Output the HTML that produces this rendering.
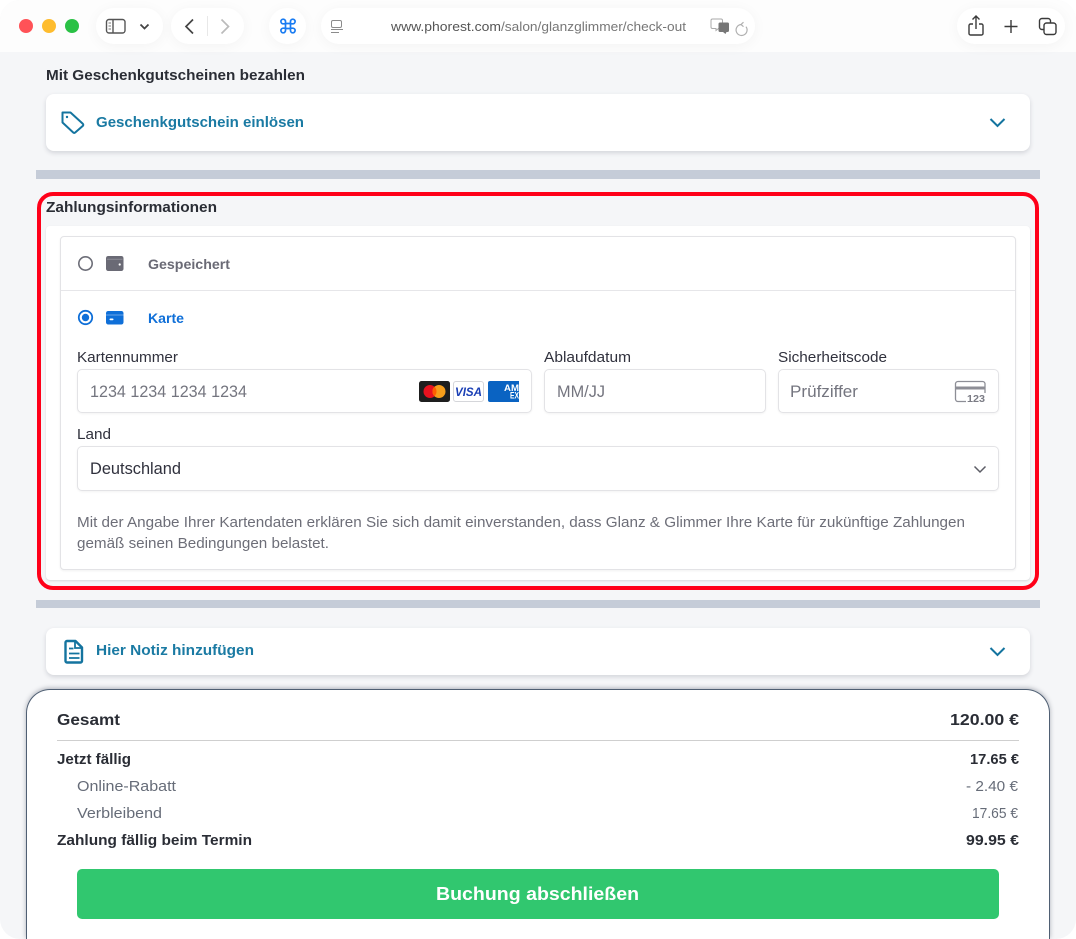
<!DOCTYPE html>
<html lang="de"><head><meta charset="utf-8"><title>Checkout</title>
<style>
html,body{margin:0;padding:0;width:1076px;height:939px;overflow:hidden;background:#fff}
#w{position:absolute;left:0;top:0;width:1076px;height:939px;background:#f5f6f8;border-radius:20px;overflow:hidden}
.b{position:absolute;box-sizing:border-box}
#top{left:0;top:0;width:1076px;height:52px;background:#fdfdfd}
.pill{background:#fff;height:36px;top:8px;border-radius:18px;box-shadow:0 2px 14px rgba(0,0,0,.045)}
.card{background:#fff;border-radius:8px;left:46px;width:984px;box-shadow:0 2px 5px rgba(30,40,60,.16)}
.bar{background:#c5ccd8;left:36px;width:1004px}
.inp{background:#fff;border:1px solid #e3e3e6;border-radius:5px;box-shadow:0 1px 2px rgba(0,0,0,.05)}
svg{position:absolute;left:0;top:0}
text{font-family:"Liberation Sans",sans-serif}
.h{font-weight:700;fill:#2a2d35;font-size:14.500px}
.l{fill:#30313d;font-size:14.500px}
.p{fill:#74757f;font-size:17px}
.m{fill:#666c78;font-size:14.500px}
.g{fill:#6d6e78;font-size:14.500px}
.t{font-weight:700;fill:#1a7aa3;font-size:14.500px}
</style></head><body>
<div id="w">
<div class="b" id="top"></div>
<div class="b pill" style="left:96px;width:67px"></div>
<div class="b pill" style="left:171px;width:73px"></div>
<div class="b pill" style="left:269px;width:37px"></div>
<div class="b pill" style="left:321px;width:434px"></div>
<div class="b pill" style="left:957px;width:108px"></div>

<div class="b card" style="top:94px;height:57px"></div>
<div class="b bar" style="top:170px;height:9px"></div>
<div class="b" style="left:46px;top:226px;width:984px;height:354px;background:#fff;border-radius:4px;box-shadow:0 1px 2px rgba(0,0,0,.12)"></div>
<div class="b" style="left:37px;top:192px;width:1002px;height:398px;border:4px solid #ff0019;border-radius:16px"></div>
<div class="b" style="left:60px;top:236px;width:956px;height:334px;background:#fff;border:1px solid #e3e3e6;border-radius:4px;box-shadow:0 1px 2px rgba(0,0,0,.06)"></div>
<div class="b" style="left:61px;top:290px;width:954px;height:1px;background:#e6e6e9"></div>
<div class="b inp" style="left:77px;top:369px;width:455px;height:44px"></div>
<div class="b inp" style="left:544px;top:369px;width:222px;height:44px"></div>
<div class="b inp" style="left:778px;top:369px;width:221px;height:44px"></div>
<div class="b inp" style="left:77px;top:446px;width:922px;height:45px"></div>
<div class="b bar" style="top:600px;height:8px"></div>
<div class="b card" style="top:628px;height:47px"></div>
<div class="b" style="left:26px;top:689px;width:1024px;height:250px;background:#fff;border:1px solid #4f5f73;border-bottom:0;border-radius:24px 24px 0 0;box-shadow:0 -1px 5px rgba(40,50,70,.35)"></div>
<div class="b" style="left:57px;top:740px;width:962px;height:1px;background:#cfcfcf"></div>
<div class="b" style="left:77px;top:869px;width:922px;height:50px;background:#31c76f;border-radius:5px"></div>

<svg width="1076" height="939" viewBox="0 0 1076 939" xmlns="http://www.w3.org/2000/svg">
<!-- window controls -->
<circle cx="26" cy="26" r="7" fill="#ff5257"/><circle cx="49" cy="26" r="7" fill="#febc2e"/><circle cx="72" cy="26" r="7" fill="#2ac145"/>
<!-- sidebar -->
<g fill="none" stroke="#555" stroke-width="1.400"><rect x="106.500" y="19.500" width="18.500" height="13.500" rx="2.500"/><path d="M113 19.500V33"/></g>
<path d="M108.500 23h2.500M108.500 26h2.500M108.500 29h2.500" stroke="#777" stroke-width="1"/>
<path d="M140.500 24.500l4 4 4-4" fill="none" stroke="#444" stroke-width="1.800"/>
<path d="M193 19.500l-7 7 7 7" fill="none" stroke="#444" stroke-width="1.700"/>
<path d="M207.500 16v20" stroke="#e8e8e8"/>
<path d="M221.500 19.500l7 7-7 7" fill="none" stroke="#bbb" stroke-width="1.700"/>
<!-- command -->
<path d="M285.500 23.500h5v5h-5zM285.500 23.500v-2a2.300 2.300 0 1 0-2.300 2.300h2.300M290.500 23.500v-2a2.300 2.300 0 1 1 2.300 2.300h-2.300M285.500 28.500v2a2.300 2.300 0 1 1-2.300-2.300h2.300M290.500 28.500v2a2.300 2.300 0 1 0 2.300-2.300h-2.300" transform="translate(0 0)" fill="none" stroke="#1a7cf2" stroke-width="1.700"/>
<!-- reader -->
<g fill="none" stroke="#8b8b8b" stroke-width="1"><rect x="331.500" y="20.500" width="10" height="7" rx="1.500"/><path d="M331 29.500h12M331 32.500h8"/></g>
<text x="391" y="31" font-size="13" fill="#555" textLength="110" lengthAdjust="spacingAndGlyphs">www.phorest.com</text>
<text x="501" y="31" font-size="13" fill="#777" textLength="185" lengthAdjust="spacingAndGlyphs">/salon/glanzglimmer/check-out</text>
<!-- translate + reload -->
<path d="M713 19h8a1.500 1.500 0 0 1 1.500 1.500v6.500a1.500 1.500 0 0 1-1.500 1.500h-2.500l-2.500 2v-2h-3.500a1.500 1.500 0 0 1-1.500-1.500v-6.500a1.500 1.500 0 0 1 1.500-1.500z" fill="#fff" stroke="#aaa"/>
<path d="M720 22.500h7.500a1.500 1.500 0 0 1 1.500 1.500v6.500a1.500 1.500 0 0 1-1.500 1.500h-1l-1 2-2.500-2h-3a1.500 1.500 0 0 1-1.500-1.500v-6.500a1.500 1.500 0 0 1 1.500-1.500z" fill="#777"/>
<path d="M741 22.500a5.500 5.500 0 1 0 5 2.200M743.500 20.200l-2.500 2.300 2.500 2.200" fill="none" stroke="#b0b0b0" stroke-width="1.200" transform="translate(0 2)"/>
<!-- share plus tabs -->
<g fill="none" stroke="#3a3a3a" stroke-width="1.400"><path d="M973 24h-2.500a1.500 1.500 0 0 0-1.500 1.500v8a1.500 1.500 0 0 0 1.500 1.500h11a1.500 1.500 0 0 0 1.500-1.500v-8a1.500 1.500 0 0 0-1.500-1.500h-2.500"/><path d="M976 29V16.500M972.500 19.500l3.500-3.500 3.500 3.500"/><path d="M1011 20v13M1004.500 26.500h13"/><rect x="1039.500" y="18.500" width="11" height="11" rx="2.500"/><rect x="1044" y="23" width="12" height="11.500" rx="2.500" fill="#fff"/></g>

<text class="h" x="46" y="80" textLength="259" lengthAdjust="spacingAndGlyphs">Mit Geschenkgutscheinen bezahlen</text>
<!-- tag -->
<path d="M62.500 112.500h8l12.300 11.200a1.500 1.500 0 0 1 0 2.200l-7.600 6.600a1.500 1.500 0 0 1-2 0l-10.700-10z" fill="none" stroke="#14749f" stroke-width="2" stroke-linejoin="round"/><circle cx="67" cy="117" r="1.200" fill="#14749f"/>
<text class="t" x="96" y="127" textLength="208" lengthAdjust="spacingAndGlyphs">Geschenkgutschein einlösen</text>
<path d="M990.500 119l7 7 7-7" fill="none" stroke="#14749f" stroke-width="2"/>

<text class="h" x="46" y="212" textLength="171" lengthAdjust="spacingAndGlyphs">Zahlungsinformationen</text>
<!-- radios -->
<circle cx="85.500" cy="263.500" r="6.700" fill="#fff" stroke="#6d6e78" stroke-width="1.600"/>
<circle cx="85.500" cy="317.500" r="6.700" fill="#fff" stroke="#0f6fd8" stroke-width="1.800"/><circle cx="85.500" cy="317.500" r="3.700" fill="#0f6fd8"/>
<rect x="106" y="256" width="17.500" height="15" rx="2.200" fill="#6a6a75"/><path d="M107 259.200h15.500" stroke="#9a9aa3" stroke-width=".7"/><circle cx="119.700" cy="264.500" r="1.100" fill="#fff"/>
<rect x="106" y="311" width="17.500" height="13.500" rx="2.200" fill="#0f6fd8"/><path d="M106 315h17.500" stroke="#8ab9ee" stroke-width=".8"/><rect x="109.500" y="318.500" width="4" height="1.800" rx=".9" fill="#fff"/>
<text x="148" y="269" font-size="14" font-weight="700" fill="#6a6a75" textLength="82" lengthAdjust="spacingAndGlyphs">Gespeichert</text>
<text x="148" y="323" font-size="14" font-weight="700" fill="#0f6fd8" textLength="36" lengthAdjust="spacingAndGlyphs">Karte</text>

<text class="l" x="77" y="362" textLength="101" lengthAdjust="spacingAndGlyphs">Kartennummer</text>
<text class="l" x="544" y="362" textLength="87" lengthAdjust="spacingAndGlyphs">Ablaufdatum</text>
<text class="l" x="778" y="362" textLength="109" lengthAdjust="spacingAndGlyphs">Sicherheitscode</text>
<text class="p" x="90" y="397" textLength="157" lengthAdjust="spacingAndGlyphs">1234 1234 1234 1234</text>
<text class="p" x="557" y="397" textLength="48" lengthAdjust="spacingAndGlyphs">MM/JJ</text>
<text class="p" x="790" y="397" textLength="68" lengthAdjust="spacingAndGlyphs">Prüfziffer</text>

<!-- card logos -->
<rect x="419" y="381" width="31" height="21" rx="2.500" fill="#1e1e1e"/><circle cx="430" cy="391.500" r="6.500" fill="#e8121f"/><circle cx="439" cy="391.500" r="6.500" fill="#f79e1b"/><path d="M434.500 386.800a6.500 6.500 0 0 1 0 9.400a6.500 6.500 0 0 1 0-9.400z" fill="#ff5f00"/>
<rect x="453.500" y="381.500" width="30" height="20" rx="2.500" fill="#fff" stroke="#d5d6da"/>
<text x="455" y="396" font-size="12" font-weight="700" font-style="italic" fill="#1a3fb5" textLength="27" lengthAdjust="spacingAndGlyphs">VISA</text>
<path d="M490 381h29v21h-29a2 2 0 0 1-2-2v-17a2 2 0 0 1 2-2z" fill="#0a63c2"/>
<text x="504" y="391" font-size="9.500" font-weight="700" fill="#fff" textLength="15" lengthAdjust="spacingAndGlyphs">AM</text>
<text x="510" y="398.500" font-size="9.500" font-weight="700" fill="#fff" textLength="9" lengthAdjust="spacingAndGlyphs">EX</text>
<!-- cvc -->
<path d="M966 401.500h-8a2.500 2.500 0 0 1-2.500-2.500v-15a2.500 2.500 0 0 1 2.500-2.500h24.500a2.500 2.500 0 0 1 2.500 2.500v9" fill="none" stroke="#8d8e96" stroke-width="1.300"/><rect x="955.500" y="386.500" width="29.500" height="3" fill="#8d8e96"/>
<text x="967" y="402" font-size="10" font-weight="700" fill="#7b7c85" textLength="18" lengthAdjust="spacingAndGlyphs">123</text>

<text class="l" x="77" y="439" textLength="34" lengthAdjust="spacingAndGlyphs">Land</text>
<text x="90" y="474" font-size="16.500" fill="#30313d" textLength="91" lengthAdjust="spacingAndGlyphs">Deutschland</text>
<path d="M974.500 466.500l5.500 5.500 5.500-5.500" fill="none" stroke="#5c5d66" stroke-width="1.500"/>
<text class="g" x="77" y="527" textLength="888" lengthAdjust="spacingAndGlyphs">Mit der Angabe Ihrer Kartendaten erklären Sie sich damit einverstanden, dass Glanz &amp; Glimmer Ihre Karte für zukünftige Zahlungen</text>
<text class="g" x="77" y="548" textLength="252" lengthAdjust="spacingAndGlyphs">gemäß seinen Bedingungen belastet.</text>

<!-- note -->
<path d="M67 641h8.500l6.500 6.500v13.500a1.500 1.500 0 0 1-1.500 1.500h-13.500a1.500 1.500 0 0 1-1.500-1.500v-18.500a1.500 1.500 0 0 1 1.500-1.500z" fill="none" stroke="#14749f" stroke-width="2.400" stroke-linejoin="round"/><path d="M75 641.500v6.500h6.500M69 648.500h4.500M69 653.500h10.500M69 658h10.500" fill="none" stroke="#14749f" stroke-width="1.800"/>
<text class="t" x="96" y="655" textLength="158" lengthAdjust="spacingAndGlyphs">Hier Notiz hinzufügen</text>
<path d="M990.500 648l7 7 7-7" fill="none" stroke="#14749f" stroke-width="2"/>

<!-- totals -->
<text x="57" y="725" font-size="15.500" font-weight="700" fill="#2a2d35" textLength="63" lengthAdjust="spacingAndGlyphs">Gesamt</text>
<text x="950" y="725" font-size="15.500" font-weight="700" fill="#2a2d35" textLength="69" lengthAdjust="spacingAndGlyphs">120.00 €</text>
<text class="h" x="57" y="764" textLength="74" lengthAdjust="spacingAndGlyphs">Jetzt fällig</text>
<text class="h" x="970" y="764" textLength="49" lengthAdjust="spacingAndGlyphs">17.65 €</text>
<text class="m" x="77" y="791" textLength="99" lengthAdjust="spacingAndGlyphs">Online-Rabatt</text>
<text class="m" x="966" y="791" textLength="52" lengthAdjust="spacingAndGlyphs">- 2.40 €</text>
<text class="m" x="77" y="818" textLength="85" lengthAdjust="spacingAndGlyphs">Verbleibend</text>
<text class="m" x="972" y="818" textLength="46" lengthAdjust="spacingAndGlyphs">17.65 €</text>
<text class="h" x="57" y="845" textLength="195" lengthAdjust="spacingAndGlyphs">Zahlung fällig beim Termin</text>
<text class="h" x="966" y="845" textLength="53" lengthAdjust="spacingAndGlyphs">99.95 €</text>
<text x="436" y="900" font-size="18.500" font-weight="700" fill="#fff" textLength="203" lengthAdjust="spacingAndGlyphs">Buchung abschließen</text>
</svg>
</div>
</body></html>
